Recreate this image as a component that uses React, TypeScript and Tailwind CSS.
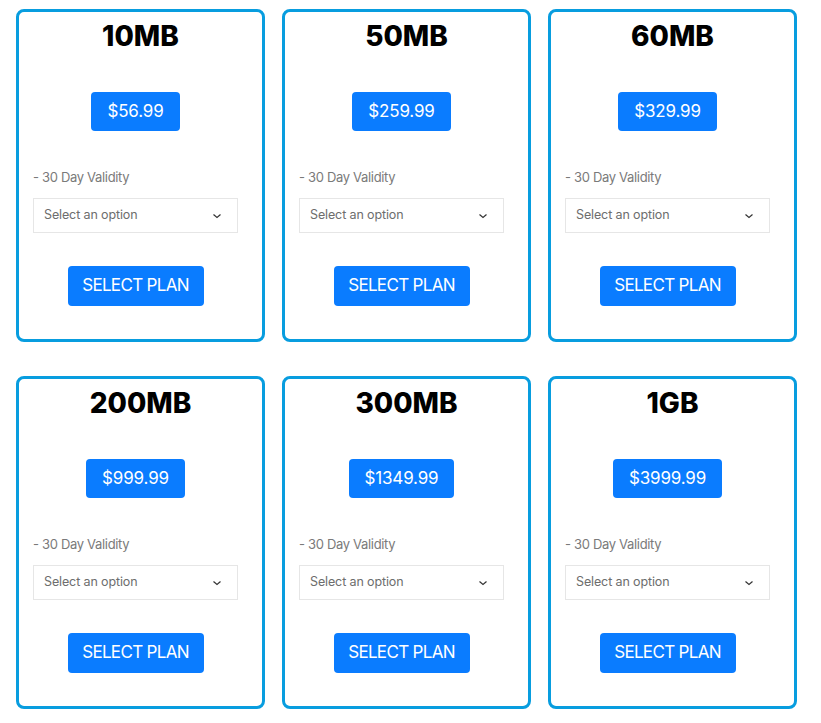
type Plan = {
  size: string;
  price: string;
};

const plans: Plan[] = [
  { size: '10MB', price: '$56.99' },
  { size: '50MB', price: '$259.99' },
  { size: '60MB', price: '$329.99' },
  { size: '200MB', price: '$999.99' },
  { size: '300MB', price: '$1349.99' },
  { size: '1GB', price: '$3999.99' }
];

function Chevron() {
  return (
    <svg width="10" height="10" viewBox="0 0 10 10" fill="none" className="shrink-0">
      <path d="M1.5 3.5 5 6.5 8.5 3.5" stroke="#333" strokeWidth="1.2" />
    </svg>
  );
}

function PlanCard({ plan }: { plan: Plan }) {
  return (
    <div className="flex flex-col border-[3px] border-[#089ddf] rounded-lg bg-white h-[333px]">
      <h2 className="pt-2 text-center text-[28px] leading-[32px] font-extrabold text-black">
        {plan.size}
      </h2>
      <div className="flex flex-col pl-[14px] pr-[24px]">
        <div className="mt-10 flex justify-center">
          <span className="h-[39px] px-4 flex items-center rounded bg-[#0a7cff] text-white text-[17px] tracking-[-0.01em]">
            {plan.price}
          </span>
        </div>
        <p className="mt-9 text-[13px] leading-5 tracking-tight text-[#7a7a7a]">- 30 Day Validity</p>
        <div className="mt-[11px] h-[35px] border border-[#e6e6e6] flex items-center justify-between pl-[10px] pr-[15px]">
          <span className="text-[12.5px] tracking-[-0.01em] text-[#6d6d6d]">Select an option</span>
          <Chevron />
        </div>
        <div className="mt-[33px] flex justify-center">
          <button
            type="button"
            className="h-10 w-[136px] rounded bg-[#0a7cff] text-white text-[17px] tracking-[-0.04em]"
          >
            SELECT PLAN
          </button>
        </div>
      </div>
    </div>
  );
}

export default function App() {
  return (
    <div className="min-h-screen bg-white font-['Inter',sans-serif]">
      <div className="grid grid-cols-3 gap-x-[17px] gap-y-[34px] pl-4 pt-[9px] w-[797px]">
        {plans.map(plan => (
          <PlanCard key={plan.size} plan={plan} />
        ))}
      </div>
    </div>
  );
}
